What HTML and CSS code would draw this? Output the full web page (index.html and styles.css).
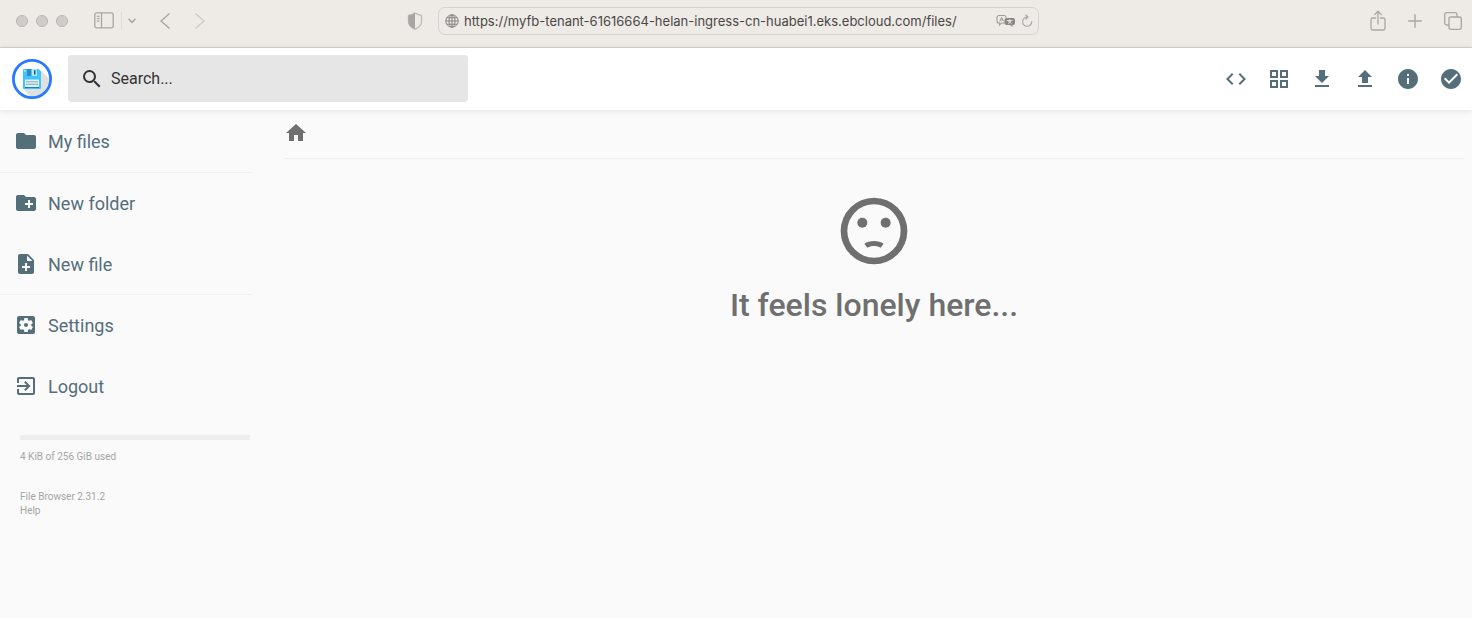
FILE: index.html
```html
<!DOCTYPE html>
<html lang="en">
<head>
<meta charset="utf-8">
<title>File Browser</title>
<link rel="stylesheet" href="styles.css">
</head>
<body>
<div class="browser">
  <div class="browser-left">
    <div class="lights"><span class="light"></span><span class="light"></span><span class="light"></span></div>
    <button class="chrome-btn sidebar-btn" aria-label="Show sidebar"><svg width="20" height="17" viewBox="0 0 20 17" fill="none" stroke="currentColor" stroke-width="1.3"><rect x=".8" y=".8" width="18.4" height="15" rx="2"/><path d="M7.5 1v15M2.8 4.3h2.6M2.8 6.7h2.6M2.8 9.1h2.6"/></svg></button>
    <button class="chrome-btn tabs-btn" aria-label="Tab groups"><svg width="8" height="6" viewBox="0 0 8 6" fill="none" stroke="currentColor" stroke-width="1.5" stroke-linecap="round" stroke-linejoin="round"><path d="M1 1.2l3 3.2 3-3.2"/></svg></button>
    <button class="chrome-btn back-btn" aria-label="Back"><svg width="10" height="16" viewBox="0 0 10 16" fill="none" stroke="currentColor" stroke-width="1.5" stroke-linecap="round" stroke-linejoin="round"><path d="M9 1L1 8l8 7"/></svg></button>
    <button class="chrome-btn forward-btn" aria-label="Forward" disabled><svg width="10" height="16" viewBox="0 0 10 16" fill="none" stroke="currentColor" stroke-width="1.5" stroke-linecap="round" stroke-linejoin="round"><path d="M1 1l8 7-8 7"/></svg></button>
  </div>
  <div class="browser-center">
    <button class="chrome-btn" aria-label="Privacy report"><svg width="16" height="18" viewBox="0 0 16 18"><path d="M8 1C6.500 2.300 4 3 1.500 3.300V10C1.500 13 4 15.500 8 17.200C12 15.500 14.500 13 14.500 10V3.300C12 3 9.500 2.300 8 1Z" fill="none" stroke="#bdb9b5" stroke-width="1.300"/><path d="M8 1C6.500 2.300 4 3 1.500 3.300V10C1.500 13 4 15.500 8 17.200Z" fill="#a8a4a1"/></svg></button>
    <div class="address">
      <svg width="14" height="14" viewBox="0 0 14 14" fill="none" stroke="#858280"><circle cx="7" cy="7" r="6.200"/><ellipse cx="7" cy="7" rx="3" ry="6.200"/><path d="M7 .8v12.400M.8 7h12.400M1.800 3.800h10.400M1.800 10.200h10.400"/></svg>
      <input class="address-input" type="text" aria-label="Address" value="https://myfb-tenant-61616664-helan-ingress-cn-huabei1.eks.ebcloud.com/files/">
      <button class="chrome-btn" aria-label="Translate"><svg width="20" height="14" viewBox="0 0 20 14"><path d="M9 9H5.500L3.500 11V9H3A2 2 0 0 1 1 7V3.500A2 2 0 0 1 3 1.500H8A2 2 0 0 1 10 3.500" fill="none" stroke="#a09c99" stroke-width="1.100"/><path d="M3.800 7.300L5.700 3.200L7.600 7.300M4.500 6H7" fill="none" stroke="#a09c99"/><path d="M10.500 4H17A2 2 0 0 1 19 6V9A2 2 0 0 1 17 11H16.500V13L14 11H10.500A2 2 0 0 1 8.500 9V6A2 2 0 0 1 10.500 4Z" fill="#8b8785"/><path d="M11 6.500h5.500M13.700 5.200V6.500M12 9.700L15.500 6.700M12 6.700L15.500 9.700" fill="none" stroke="#efeae6" stroke-width=".9"/></svg></button>
      <button class="chrome-btn" aria-label="Reload"><svg width="12" height="13" viewBox="0 0 12 13" fill="none" stroke="currentColor" stroke-width="1.100" stroke-linecap="round" stroke-linejoin="round"><path d="M6.500 3A4.600 4.600 0 1 0 10.800 7.500M4.800 1L7 3L4.800 5.200"/></svg></button>
    </div>
  </div>
  <div class="browser-right">
    <button class="chrome-btn" aria-label="Share"><svg width="16" height="22" viewBox="0 0 16 22" fill="none" stroke="currentColor" stroke-width="1.300" stroke-linecap="round" stroke-linejoin="round"><path d="M5.500 8H2.800A1.800 1.800 0 0 0 1 9.800V18.200A1.800 1.800 0 0 0 2.800 20H13.200A1.800 1.800 0 0 0 15 18.200V9.800A1.800 1.800 0 0 0 13.200 8H10.500M8 14V1.500M4.800 4.500L8 1.300L11.200 4.500"/></svg></button>
    <button class="chrome-btn" aria-label="New tab"><svg width="14" height="14" viewBox="0 0 14 14" stroke="currentColor" stroke-width="1.400" stroke-linecap="round"><path d="M7 .7v12.600M.7 7h12.600"/></svg></button>
    <button class="chrome-btn" aria-label="Tab overview"><svg width="18" height="18" viewBox="0 0 18 18" fill="none" stroke="currentColor" stroke-width="1.300"><rect x="5" y="5" width="12.300" height="12.300" rx="2"/><path d="M5 13H2.700A2 2 0 0 1 .7 11V2.700A2 2 0 0 1 2.700 .7H11A2 2 0 0 1 13 2.700V5"/></svg></button>
  </div>
</div>

<header class="header">
  <svg class="logo" width="40" height="40" viewBox="0 0 40 40"><circle cx="20" cy="20" r="18.500" fill="#fff"/><path d="M28 10.500L37 19.500A17.200 17.200 0 0 1 17.500 37L11.500 30Z" fill="#e0e0e0"/><circle cx="20" cy="20" r="18.600" fill="none" stroke="#2979ff" stroke-width="2.800"/><path d="M12 10H26.500L29 12.500V29A1 1 0 0 1 28 30H12A1 1 0 0 1 11 29V11A1 1 0 0 1 12 10Z" fill="#40c4ff"/><path d="M15 10h10v7H15z" fill="#b3e5fc"/><path d="M15 10h4.500v7H15z" fill="#2a8fc0"/><path d="M22 11.200h1.500v4.300H22z" fill="#155a9b"/><path d="M12.200 11.200h1.300v1.300h-1.300z" fill="#fff"/><path d="M13 20.500h14v7.500H13z" fill="#e1f3fb"/><path d="M14 22.800h12M14 25.300h12" stroke="#7fa9bb"/><path d="M13 28h14v1H13z" fill="#0288d1"/></svg>
  <label class="search">
    <svg width="24" height="24" viewBox="0 0 24 24" fill="currentColor"><path d="M15.500 14h-.79l-.28-.27A6.471 6.471 0 0 0 16 9.500 6.500 6.500 0 1 0 9.500 16c1.610 0 3.090-.59 4.230-1.570l.27.28v.79l5 4.990L20.490 19l-4.990-5zm-6 0C7.010 14 5 11.990 5 9.500S7.010 5 9.500 5 14 7.010 14 9.500 11.990 14 9.500 14z"/></svg>
    <input class="search-input" type="text" placeholder="Search..." aria-label="Search">
  </label>
  <div class="actions">
    <button class="action" aria-label="Toggle shell"><svg class="icon" viewBox="0 0 24 24"><path d="M9.400 16.600L4.800 12l4.600-4.600L8 6l-6 6 6 6 1.400-1.400zm5.200 0l4.600-4.600-4.600-4.600L16 6l6 6-6 6-1.400-1.400z"/></svg></button>
    <button class="action" aria-label="Switch view"><svg class="icon" viewBox="0 0 24 24"><path fill-rule="evenodd" d="M3 3v8h8V3H3zm6 6H5V5h4v4zm-6 4v8h8v-8H3zm6 6H5v-4h4v4zm4-16v8h8V3h-8zm6 6h-4V5h4v4zm-6 4v8h8v-8h-8zm6 6h-4v-4h4v4z"/></svg></button>
    <button class="action" aria-label="Download"><svg class="icon" viewBox="0 0 24 24"><path d="M19 9h-4V3H9v6H5l7 7 7-7zM5 18v2h14v-2H5z"/></svg></button>
    <button class="action" aria-label="Upload"><svg class="icon" viewBox="0 0 24 24"><path d="M9 16h6v-6h4l-7-7-7 7h4zm-4 2h14v2H5z"/></svg></button>
    <button class="action" aria-label="Info"><svg class="icon" viewBox="0 0 24 24"><path d="M12 2C6.480 2 2 6.480 2 12s4.480 10 10 10 10-4.480 10-10S17.520 2 12 2zm1 15h-2v-6h2v6zm0-8h-2V7h2v2z"/></svg></button>
    <button class="action" aria-label="Select multiple"><svg class="icon" viewBox="0 0 24 24"><path d="M12 2C6.480 2 2 6.480 2 12s4.480 10 10 10 10-4.480 10-10S17.520 2 12 2zm-2 15l-5-5 1.410-1.410L10 14.170l7.590-7.590L19 8l-9 9z"/></svg></button>
  </div>
</header>

<div class="layout">
  <nav class="sidebar">
    <div class="group">
      <button class="item"><svg class="icon" viewBox="0 0 24 24"><path d="M10 4H4c-1.100 0-1.990.9-1.990 2L2 18c0 1.100.9 2 2 2h16c1.100 0 2-.9 2-2V8c0-1.100-.9-2-2-2h-8l-2-2z"/></svg>My files</button>
    </div>
    <div class="group">
      <button class="item"><svg class="icon" viewBox="0 0 24 24"><path d="M20 6h-8l-2-2H4c-1.110 0-1.990.89-1.990 2L2 18c0 1.110.89 2 2 2h16c1.110 0 2-.89 2-2V8c0-1.110-.89-2-2-2zm-1 8h-3v3h-2v-3h-3v-2h3V9h2v3h3v2z"/></svg>New folder</button>
      <button class="item"><svg class="icon" viewBox="0 0 24 24"><path d="M14 2H6c-1.100 0-1.990.9-1.990 2L4 20c0 1.100.89 2 1.990 2H18c1.100 0 2-.9 2-2V8l-6-6zm2 14h-3v3h-2v-3H8v-2h3v-3h2v3h3v2zm-3-7V3.500L18.500 9H13z"/></svg>New file</button>
    </div>
    <div class="group">
      <button class="item"><svg class="icon" viewBox="0 0 24 24"><path d="M12 10c-1.100 0-2 .9-2 2s.9 2 2 2 2-.9 2-2-.9-2-2-2zm7-7H5c-1.110 0-2 .9-2 2v14c0 1.100.89 2 2 2h14c1.110 0 2-.9 2-2V5c0-1.100-.89-2-2-2zm-1.750 9c0 .23-.02.46-.05.68l1.480 1.160c.13.110.17.300.08.450l-1.400 2.420c-.09.150-.27.210-.43.150l-1.740-.7c-.36.280-.76.510-1.180.69l-.26 1.850c-.03.170-.18.300-.35.300h-2.800c-.17 0-.32-.13-.35-.29l-.26-1.850c-.43-.18-.82-.41-1.180-.69l-1.740.7c-.16.060-.34 0-.43-.15l-1.400-2.420c-.09-.15-.05-.34.08-.45l1.480-1.160c-.03-.23-.05-.46-.05-.69 0-.23.020-.46.050-.68l-1.480-1.160c-.13-.11-.17-.3-.08-.45l1.400-2.420c.09-.15.270-.21.430-.15l1.740.7c.36-.28.760-.51 1.180-.69l.26-1.850c.03-.17.180-.3.350-.3h2.800c.17 0 .32.130.35.290l.26 1.850c.43.180.82.410 1.180.69l1.740-.7c.16-.06.340 0 .430.150l1.400 2.420c.09.150.05.340-.08.450l-1.480 1.160c.03.230.05.460.05.690z"/></svg>Settings</button>
      <button class="item"><svg class="icon" viewBox="0 0 24 24"><path d="M10.090 15.590L11.500 17l5-5-5-5-1.410 1.410L12.670 11H3v2h9.670l-2.580 2.590zM19 3H5c-1.110 0-2 .9-2 2v4h2V5h14v14H5v-4H3v4c0 1.100.89 2 2 2h14c1.100 0 2-.9 2-2V5c0-1.100-.9-2-2-2z"/></svg>Logout</button>
    </div>
    <div class="usage">
      <div class="usage-bar"></div>
      <p class="small">4 KiB of 256 GiB used</p>
    </div>
    <div class="credits">
      <p class="small">File Browser 2.31.2</p>
      <a class="small" href="#help">Help</a>
    </div>
  </nav>
  <main class="main">
    <div class="breadcrumbs"><a class="home" href="#files" aria-label="Home"><svg class="icon" viewBox="0 0 24 24"><path d="M10 20v-6h4v6h5v-8h3L12 3 2 12h3v8z"/></svg></a></div>
    <h2 class="message">
      <svg class="face" width="80" height="80" viewBox="0 0 24 24" fill="currentColor"><path fill-rule="evenodd" d="M12 2a10 10 0 1 0 0 20a10 10 0 1 0 0-20zM12 4a8 8 0 1 1 0 16a8 8 0 1 1 0-16z"/><circle cx="8.500" cy="9.500" r="1.500"/><circle cx="15.500" cy="9.500" r="1.500"/><path d="M12 15c-1.100 0-2.100.3-2.900.8l.9 1.200c.6-.35 1.250-.5 2-.5s1.400.15 2 .5l.9-1.200c-.8-.5-1.800-.8-2.900-.8z"/></svg>
      <span>It feels lonely here...</span>
    </h2>
  </main>
</div>
</body>
</html>
```
FILE: styles.css
```css
* { box-sizing: border-box; }

body {
  margin: 0;
  min-height: 100vh;
  background: #fafafa;
  color: #6f6f6f;
  font-family: Roboto, sans-serif;
  font-size: 16px;
}

button {
  border: 0;
  padding: 0;
  background: none;
  font: inherit;
  color: inherit;
  cursor: pointer;
}

svg { display: block; flex: none; }

.icon { width: 24px; height: 24px; fill: currentColor; }

/* Browser toolbar */
.browser {
  display: grid;
  grid-template-columns: 1fr 658px 1fr;
  align-items: center;
  height: 48px;
  padding-bottom: 6px;
  background: #eeeae6;
  border-bottom: 1px solid #d9d4d1;
  color: #aaa6a3;
}

.browser-left, .browser-center, .browser-right {
  display: flex;
  align-items: center;
}

.browser-left { padding-left: 16px; }
.browser-center { gap: 15px; padding-right: 26px; }
.browser-right { justify-content: flex-end; gap: 22px; padding-right: 10px; }

.lights { display: flex; gap: 8px; margin-right: 26px; }

.light {
  width: 12px;
  height: 12px;
  border: 1px solid #bab6b4;
  border-radius: 50%;
  background: #d0ccca;
}

.tabs-btn {
  display: flex;
  align-items: center;
  height: 18px;
  margin-left: 7px;
  padding-left: 6px;
  border-left: 1px solid #dfdbd8;
}

.back-btn { margin-left: 24px; }
.forward-btn { margin-left: 25px; color: #d0ccc9; }

.address {
  display: flex;
  flex: 1;
  align-items: center;
  gap: 5px;
  height: 28px;
  padding: 0 5px 0 6px;
  border: 1px solid #d6d2cf;
  border-radius: 7px;
}

.address-input {
  flex: 1;
  min-width: 0;
  padding: 0;
  border: 0;
  outline: 0;
  background: none;
  color: #4a4847;
  font-family: Inter, sans-serif;
  font-size: 13px;
}

/* Application header */
.header {
  position: relative;
  display: flex;
  align-items: center;
  height: 63px;
  padding: 0 0 1px 12px;
  background: #fff;
  border-bottom: 1px solid #eeeeee;
  box-shadow: 0 0 5px rgba(0, 0, 0, 0.1);
}

.search {
  display: flex;
  flex: 0 1 400px;
  align-items: center;
  gap: 5px;
  height: 47px;
  margin-left: 16px;
  padding: 0 12px;
  border-radius: 4px;
  background: #e6e6e6;
  color: #333;
}

.search-input {
  flex: 1;
  min-width: 0;
  border: 0;
  outline: 0;
  background: none;
  font: inherit;
}

.search-input::placeholder { color: #333; opacity: 1; }

.actions { display: flex; margin-left: auto; color: #546e7a; }

.action {
  display: flex;
  align-items: center;
  justify-content: center;
  width: 43px;
  height: 43px;
}

/* Sidebar and listing */
.layout { display: flex; }

.sidebar { flex: 0 0 252px; }

.group {
  display: grid;
  gap: 1px;
  border-bottom: 1px solid #f0f0f0;
}

.group:first-child { padding-bottom: 1px; }
.group:nth-child(3) { border-bottom: 0; }

.item {
  display: flex;
  align-items: center;
  gap: 10px;
  height: 60px;
  padding-left: 14px;
  color: #546e7a;
  font-size: 18px;
  font-weight: 500;
}

.usage { padding: 19px 2px 0 20px; }

.usage-bar { height: 5px; margin-bottom: 10px; background: #eee; }

.credits { padding: 26px 20px 0; }

.small {
  display: block;
  margin: 0;
  color: #a5a5a5;
  font-size: 10px;
  line-height: 14px;
  text-decoration: none;
}

.main { flex: 1; padding: 0 8px 0 32px; }

.breadcrumbs {
  display: flex;
  align-items: center;
  height: 48px;
  padding-bottom: 4px;
  border-bottom: 1px solid #eee;
}

.home { color: #6f6f6f; }

.message {
  display: flex;
  flex-direction: column;
  align-items: center;
  gap: 15px;
  margin: 32px 0 0;
  font-size: 32px;
  font-weight: 500;
  line-height: 38px;
}

.item { font-weight: 400; }
```
